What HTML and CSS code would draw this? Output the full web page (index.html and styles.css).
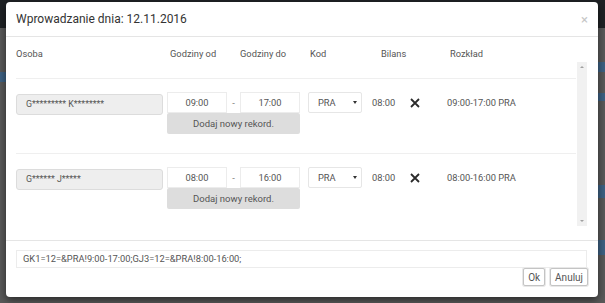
FILE: index.html
```html
<!DOCTYPE html>
<html lang="pl">
<head>
<meta charset="utf-8">
<title>Wprowadzanie dnia</title>
<link rel="stylesheet" href="styles.css">
</head>
<body>
<div class="page">
  <div class="bg-top"></div>
  <div class="bg-row h34"><span class="l"></span><span class="r"></span></div>
  <div class="bg-row h10"><span class="l"></span><span class="r blue"></span></div>
  <div class="bg-row h10"><span class="l blue"></span><span class="r"></span></div>
  <div class="bg-row h11"><span class="l"></span><span class="r"></span></div>
  <div class="bg-row h8"><span class="l"></span><span class="r blue"></span></div>
  <div class="bg-row h84"><span class="l"></span><span class="r"></span></div>
  <div class="bg-row h13"><span class="l"></span><span class="r blue"></span></div>
  <div class="bg-row h42"><span class="l"></span><span class="r"></span></div>
  <div class="bg-row h15"><span class="l"></span><span class="r blue"></span></div>
  <div class="bg-row h48"><span class="l"></span><span class="r"></span></div>
</div>

<div class="modal">
  <div class="modal-header">
    <h4 class="modal-title">Wprowadzanie dnia: 12.11.2016</h4>
    <span class="close">×</span>
  </div>

  <div class="modal-body">
    <div class="cols">
      <span class="c-osoba">Osoba</span>
      <span class="c-od">Godziny od</span>
      <span class="c-do">Godziny do</span>
      <span class="c-kod">Kod</span>
      <span class="c-bilans">Bilans</span>
      <span class="c-rozklad">Rozkład</span>
    </div>

    <div class="scroll">
      <div class="list">
        <div class="row">
          <div class="name">G********* K********</div>
          <div class="time t-od">09:00</div>
          <div class="dash">-</div>
          <div class="time t-do">17:00</div>
          <div class="select"><span>PRA</span><i class="caret"></i></div>
          <div class="bilans">08:00</div>
          <div class="remove"><svg width="10" height="10" viewBox="0 0 10 10"><path d="M1 1 L9 9 M9 1 L1 9" stroke="#2b2b2b" stroke-width="1.8" fill="none"/></svg></div>
          <div class="rozklad">09:00-17:00 PRA</div>
          <button class="add">Dodaj nowy rekord.</button>
        </div>
        <div class="row">
          <div class="name">G****** J*****</div>
          <div class="time t-od">08:00</div>
          <div class="dash">-</div>
          <div class="time t-do">16:00</div>
          <div class="select"><span>PRA</span><i class="caret"></i></div>
          <div class="bilans">08:00</div>
          <div class="remove"><svg width="10" height="10" viewBox="0 0 10 10"><path d="M1 1 L9 9 M9 1 L1 9" stroke="#2b2b2b" stroke-width="1.8" fill="none"/></svg></div>
          <div class="rozklad">08:00-16:00 PRA</div>
          <button class="add">Dodaj nowy rekord.</button>
        </div>
      </div>
      <div class="scrollbar">
        <i class="arrow up"></i>
        <i class="arrow down"></i>
      </div>
    </div>
  </div>

  <div class="modal-footer">
    <div class="result">GK1=12=&amp;PRA!9:00-17:00;GJ3=12=&amp;PRA!8:00-16:00;</div>
    <div class="actions">
      <button class="btn">Ok</button>
      <button class="btn">Anuluj</button>
    </div>
  </div>
</div>
</body>
</html>
```

FILE: styles.css
```css
html, body {
  margin: 0;
  padding: 0;
}

body {
  width: 605px;
  height: 303px;
  overflow: hidden;
  position: relative;
  background: #5a5a5a;
  font-family: Roboto, "Liberation Sans", sans-serif;
}

/* ---- background page (behind the modal) ---- */
.page {
  display: flex;
  flex-direction: column;
}

.bg-top {
  height: 28px;
  background: #1f2225;
}

.bg-row {
  display: flex;
  justify-content: space-between;
  background: #5a5a5a;
}

.bg-row .l { width: 6px; }
.bg-row .r { width: 7px; }
.bg-row .blue { background: #3e6284; }

.h8 { height: 8px; }
.h10 { height: 10px; }
.h11 { height: 11px; }
.h13 { height: 13px; }
.h15 { height: 15px; }
.h34 { height: 34px; }
.h42 { height: 42px; }
.h48 { height: 48px; }
.h84 { height: 84px; }

/* ---- modal ---- */
.modal {
  position: absolute;
  left: 6px;
  top: 2px;
  width: 592px;
  height: 295px;
  background: #fff;
  border-radius: 4px;
  box-shadow: 0 3px 9px rgba(0, 0, 0, 0.55);
  display: flex;
  flex-direction: column;
}

.modal-header {
  height: 34px;
  border-bottom: 1px solid #e5e5e5;
  padding: 0 10px;
  display: flex;
  align-items: center;
  justify-content: space-between;
}

.modal-title {
  margin: 0;
  font-size: 12px;
  font-weight: 400;
  color: #333;
}

.close {
  color: #c6c6c6;
  font-size: 13px;
  line-height: 1;
}

.modal-body {
  height: 203px;
  padding: 0 11px 0 10px;
  display: flex;
  flex-direction: column;
}

.cols,
.row {
  display: grid;
  grid-template-columns: 151px 60px 13px 60px 8px 54px 10px 38px 37px 1fr;
}

.cols {
  padding-top: 7px;
  height: 18px;
  align-items: center;
  font-size: 9.3px;
  color: #555;
}

.c-osoba { grid-column: 1; }
.c-od { grid-column: 2; padding-left: 3px; white-space: nowrap; }
.c-do { grid-column: 4; white-space: nowrap; }
.c-kod { grid-column: 6; padding-left: 2px; }
.c-bilans { grid-column: 8; padding-left: 9px; }
.c-rozklad { grid-column: 10; padding-left: 3px; }

.scroll {
  height: 164px;
  display: flex;
  overflow: hidden;
}

.list {
  flex: 1;
  padding-top: 16px;
  margin-right: 1px;
}

.row {
  box-sizing: border-box;
  height: 75px;
  border-top: 1px solid #efefef;
  padding-top: 13px;
  grid-template-rows: 21px 21px;
  font-size: 9.3px;
  color: #555;
  align-items: center;
}

.name {
  grid-column: 1;
  grid-row: 1;
  box-sizing: border-box;
  width: 147px;
  height: 21px;
  margin-top: 2px;
  border: 1px solid #dcdcdc;
  border-radius: 3px;
  background: #eeeeee;
  padding-left: 9px;
  font-size: 8.8px;
  line-height: 19px;
  color: #555;
  align-self: start;
}

.time {
  grid-row: 1;
  box-sizing: border-box;
  height: 21px;
  border: 1px solid #ececec;
  text-align: center;
  line-height: 19px;
}

.t-od { grid-column: 2; }
.t-do { grid-column: 4; }

.dash {
  grid-column: 3;
  grid-row: 1;
  text-align: center;
  color: #777;
}

.select {
  grid-column: 6;
  grid-row: 1;
  box-sizing: border-box;
  height: 21px;
  border: 1px solid #e6e6e6;
  border-radius: 2px;
  padding: 0 4px 0 9px;
  display: flex;
  align-items: center;
  justify-content: space-between;
}

.caret {
  width: 0;
  height: 0;
  border-left: 2.5px solid transparent;
  border-right: 2.5px solid transparent;
  border-top: 3.5px solid #333;
}

.bilans {
  grid-column: 8;
  grid-row: 1;
}

.remove {
  grid-column: 9;
  grid-row: 1;
  display: flex;
  align-items: center;
}

.rozklad {
  grid-column: 10;
  grid-row: 1;
}

.add {
  grid-column: 2 / 5;
  grid-row: 2;
  height: 21px;
  border: none;
  border-radius: 2px;
  background: #dddddd;
  font-family: inherit;
  font-size: 9.5px;
  color: #555;
  padding: 0;
}

.scrollbar {
  width: 10px;
  background: #f1f1f1;
  display: flex;
  flex-direction: column;
  justify-content: space-between;
  align-items: center;
  padding: 4px 0;
  box-sizing: border-box;
}

.arrow {
  width: 0;
  height: 0;
  border-left: 2px solid transparent;
  border-right: 2px solid transparent;
}

.arrow.up { border-bottom: 2px solid #a0a0a0; }
.arrow.down { border-top: 2px solid #a0a0a0; }

/* ---- footer ---- */
.modal-footer {
  flex: 1;
  border-top: 1px solid #e5e5e5;
  padding: 9px 11px 0 10px;
}

.result {
  box-sizing: border-box;
  height: 18px;
  border: 1px solid #ececec;
  padding-left: 6px;
  font-size: 9.3px;
  line-height: 16px;
  color: #555;
}

.actions {
  display: flex;
  justify-content: flex-end;
  gap: 5px;
  margin-right: -1px;
}

.btn {
  height: 18px;
  padding: 0 4px;
  border: 1px solid #c4c4c4;
  border-radius: 2px;
  background: #fff;
  box-shadow: 0 0 0 1px #e8e8e8;
  font-family: inherit;
  font-size: 10px;
  color: #555;
}
```
